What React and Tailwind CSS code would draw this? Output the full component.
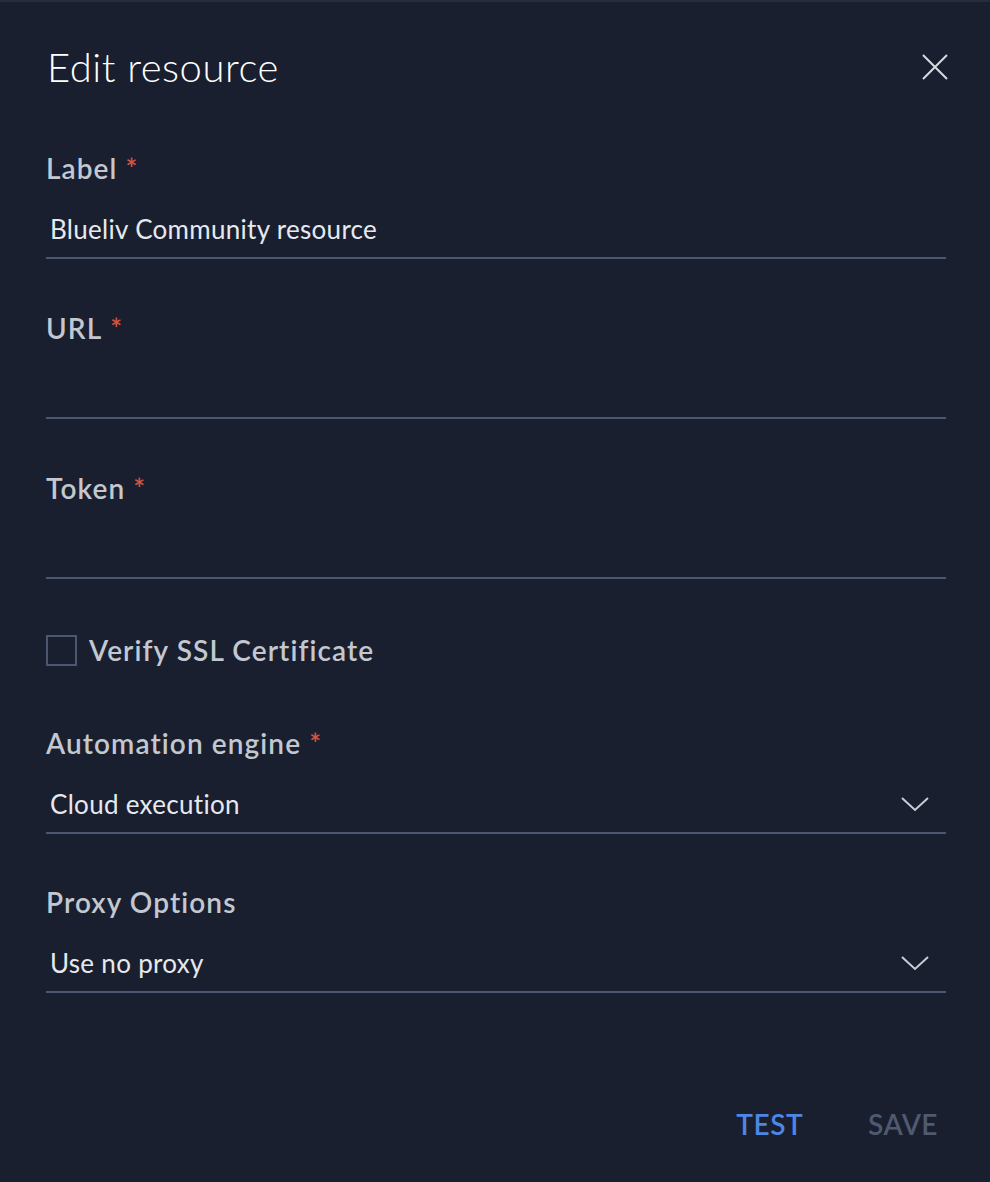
import React, { useState } from 'react';

const Req = () => <span className="ml-[8px] text-[#d5533f]">*</span>;

const Chevron = () => (
  <svg width="28" height="16" viewBox="0 0 28 16" fill="none" className="mr-[17px]">
    <path d="M1 2 L14 14 L27 2" stroke="#c9ced6" strokeWidth="2" />
  </svg>
);

const Field = ({ label, required, value, select, mt }) => (
  <div className={mt}>
    <div className="h-[32px] leading-[32px] text-[28px] font-semibold text-[#c3c8d0] tracking-[1.1px]">
      {label}
      {required && <Req />}
    </div>
    <div className="mt-[17px] h-[58px] flex items-center justify-between border-b-2 border-[#4b5670] pl-[4px]">
      <span className="text-[26px] text-[#e6e9ee] tracking-[0.3px]">{value}</span>
      {select && <Chevron />}
    </div>
  </div>
);

const App = () => {
  const [checked, setChecked] = useState(false);

  return (
    <div
      className="w-full h-[1182px] bg-[#191f2f] border-t-2 border-[#262d3d] pl-[46px] pr-[44px] flex flex-col"
      style={{ fontFamily: 'Lato, "Open Sans", sans-serif' }}
    >
      {/* Header */}
      <div className="pt-[41px] flex items-center justify-between">
        <h1 className="text-[40px] leading-[48px] font-light text-white tracking-[0.5px] pl-[1px]">Edit resource</h1>
        <button className="mr-[-2px]">
          <svg width="26" height="26" viewBox="0 0 26 26" fill="none">
            <path d="M1 1 L25 25 M25 1 L1 25" stroke="#d7dbe2" strokeWidth="2" />
          </svg>
        </button>
      </div>

      <Field label="Label" required value="Blueliv Community resource" mt="mt-[61px]" />
      <Field label="URL" required value="" mt="mt-[53px]" />
      <Field label="Token" required value="" mt="mt-[53px]" />

      {/* Checkbox */}
      <label className="mt-[56px] h-[31px] flex items-center cursor-pointer">
        <span
          onClick={() => setChecked(!checked)}
          className={`w-[31px] h-[31px] border-2 border-[#4b5670] ${checked ? 'bg-[#4e86e4]' : ''}`}
        />
        <span className="ml-[12px] leading-[31px] text-[28px] font-semibold text-[#c3c8d0] tracking-[1.1px]">Verify SSL Certificate</span>
      </label>

      <Field label="Automation engine" required value="Cloud execution" select mt="mt-[61px]" />
      <Field label="Proxy Options" value="Use no proxy" select mt="mt-[52px]" />

      {/* Footer */}
      <div className="mt-[107px] flex justify-end items-center pr-[8px]">
        <button className="h-[48px] text-[28px] font-semibold text-[#4e86e4] tracking-[0.5px]">TEST</button>
        <button className="ml-[65px] h-[48px] text-[28px] font-semibold text-[#4f5a70] tracking-[0.5px]">SAVE</button>
      </div>
    </div>
  );
};

export default App;
